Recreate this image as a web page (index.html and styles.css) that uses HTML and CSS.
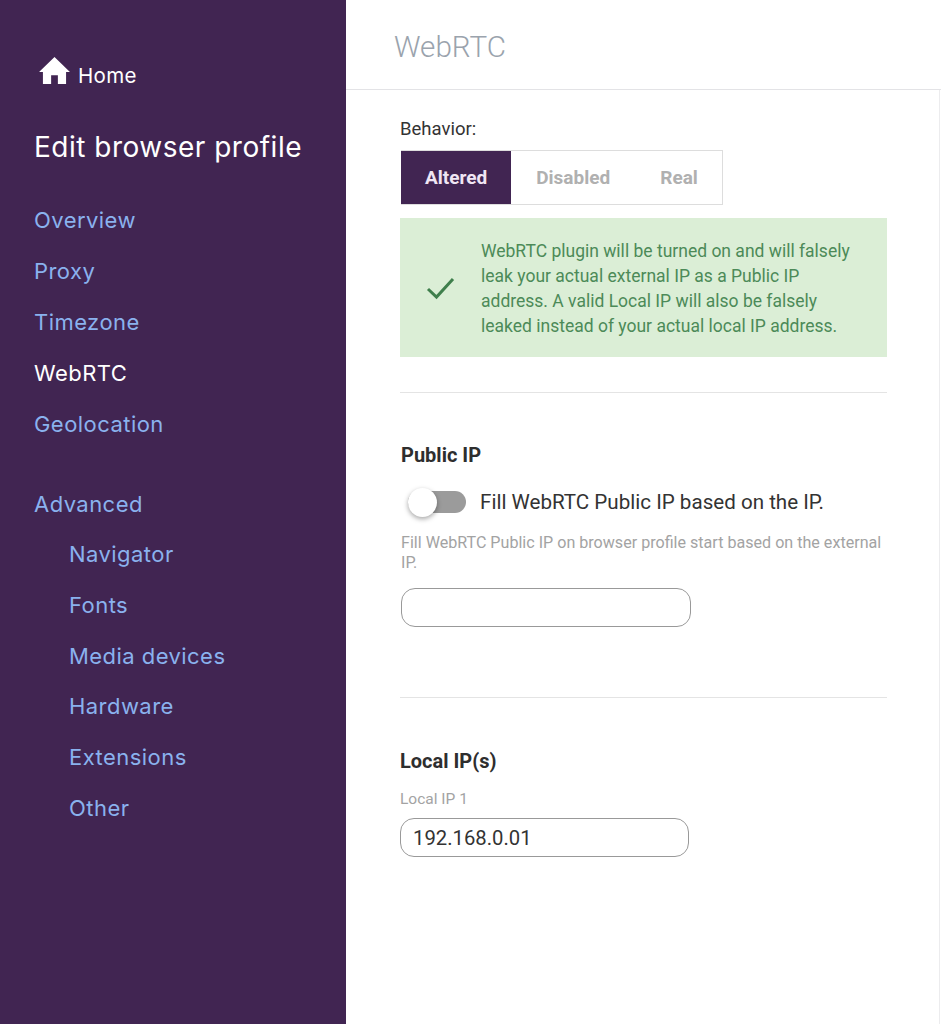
FILE: index.html
```html
<!DOCTYPE html>
<html>
<head>
	<title>WebRTC</title>
	<meta charset="utf-8">
	<link rel="stylesheet" href="styles.css">
</head>
<body>
	<div class="sidebar">
		<a class="home-link" href="#">
			<svg class="home-icon" viewBox="0 0 32 28"><path d="M16 0 L32 15.5 L28 15.5 L28 28 L19.5 28 L19.5 19 L12.5 19 L12.5 28 L4 28 L4 15.5 L0 15.5 Z"/></svg>
			<span>Home</span>
		</a>
		<h2 class="sidebar-title">Edit browser profile</h2>
		<ul class="nav">
			<li><a href="#">Overview</a></li>
			<li><a href="#">Proxy</a></li>
			<li><a href="#">Timezone</a></li>
			<li><a class="active" href="#">WebRTC</a></li>
			<li><a href="#">Geolocation</a></li>
		</ul>
		<div class="nav-heading"><a href="#">Advanced</a></div>
		<ul class="nav nav-sub">
			<li><a href="#">Navigator</a></li>
			<li><a href="#">Fonts</a></li>
			<li><a href="#">Media devices</a></li>
			<li><a href="#">Hardware</a></li>
			<li><a href="#">Extensions</a></li>
			<li><a href="#">Other</a></li>
		</ul>
	</div>

	<div class="main">
		<div class="page-header">WebRTC</div>
		<div class="content">
			<div class="behavior-label">Behavior:</div>
			<div class="segments">
				<div class="segment selected">Altered</div>
				<div class="segment">Disabled</div>
				<div class="segment">Real</div>
			</div>
			<div class="notice">
				<svg class="check-icon" viewBox="0 0 30 24"><path d="M2 13 L10.5 21 L27 3"/></svg>
				<p>WebRTC plugin will be turned on and will falsely leak your actual external IP as a Public IP address. A valid Local IP will also be falsely leaked instead of your actual local IP address.</p>
			</div>
			<hr class="divider">

			<h3 class="section-title public-title">Public IP</h3>
			<div class="toggle-row">
				<div class="toggle"><div class="toggle-knob"></div></div>
				<span>Fill WebRTC Public IP based on the IP.</span>
			</div>
			<p class="hint">Fill WebRTC Public IP on browser profile start based on the external IP.</p>
			<input class="text-input public-input" type="text">
			<hr class="divider second">

			<h3 class="section-title local-title">Local IP(s)</h3>
			<label class="field-label" for="local-ip">Local IP 1</label>
			<input class="text-input" id="local-ip" type="text" value="192.168.0.01">
		</div>
	</div>
</body>
</html>
```

FILE: styles.css
```css
* {
	box-sizing: border-box;
}

html, body {
	height: 100%;
}

body {
	margin: 0;
	display: flex;
	min-height: 1024px;
	font-family: Roboto, Arial, sans-serif;
	background-color: #ffffff;
	color: #333333;
	overflow: hidden;
}

a {
	text-decoration: none;
}

.sidebar {
	width: 346px;
	flex-shrink: 0;
	background-color: #412552;
	font-family: Inter, Arial, sans-serif;
	padding: 55px 0 0 34px;
}

.home-link {
	display: flex;
	align-items: center;
	color: #ffffff;
	font-size: 20.5px;
	letter-spacing: 0.3px;
	margin-left: 5px;
	height: 40px;
}

.home-icon {
	width: 31px;
	height: 27px;
	fill: #ffffff;
	margin-right: 8px;
	margin-top: -9px;
}

.sidebar-title {
	margin: 32px 0 0;
	font-size: 28px;
	line-height: 40px;
	font-weight: 400;
	color: #ffffff;
	letter-spacing: 0.5px;
}

.nav {
	list-style: none;
	margin: 28px 0 0;
	padding: 0;
	letter-spacing: 0.45px;
}

.nav li {
	height: 51px;
	line-height: 51px;
	font-size: 22px;
}

.nav a, .nav-heading a {
	color: #8ab2ee;
}

.nav a.active {
	color: #ffffff;
}

.nav-heading {
	margin-top: 29px;
	height: 50px;
	line-height: 51px;
	font-size: 22px;
	letter-spacing: 0.45px;
}

.nav-sub {
	margin: 0 0 0 35px;
}

.nav-sub li {
	height: 50.8px;
}

.main {
	flex: 1;
	min-width: 0;
}

.page-header {
	height: 90px;
	padding: 29px 0 0 48px;
	font-size: 29.6px;
	line-height: 36px;
	font-weight: 300;
	color: #9aa3ad;
	border-bottom: 1px solid #e3e3e6;
}

.content {
	padding: 28px 0 0 54px;
	width: 594px;
	height: 934px;
	border-right: 1px solid #ececee;
}

.behavior-label {
	font-size: 18.5px;
	line-height: 22px;
}

.segments {
	display: flex;
	width: 322px;
	height: 55px;
	margin: 10px 0 0 1px;
	border: 1px solid #dddddd;
	border-left: 0;
}

.segment {
	font-size: 19px;
	font-weight: 700;
	line-height: 54px;
	color: #b0b0b0;
	padding: 0 25px;
}

.segment.selected {
	background-color: #412552;
	color: #f0e6f4;
	width: 111px;
	padding: 0 24px;
}

.notice {
	display: flex;
	align-items: center;
	width: 487px;
	height: 139px;
	margin-top: 13px;
	padding-left: 26px;
	background-color: #dbeed6;
	color: #4c8a58;
}

.check-icon {
	width: 30px;
	height: 24px;
	flex-shrink: 0;
	margin-right: 25px;
	fill: none;
	stroke: #3f7f4c;
	stroke-width: 3;
}

.notice p {
	margin: 2px 0 0;
	font-size: 17.5px;
	line-height: 25px;
	width: 380px;
}

.divider {
	width: 487px;
	height: 1px;
	margin: 35px 0 0;
	border: 0;
	background-color: #e4e4e4;
}

.divider.second {
	margin-top: 70px;
}

.section-title {
	margin: 0;
	font-size: 20px;
	font-weight: 700;
	line-height: 24px;
	color: #2e2e2e;
}

.public-title {
	margin: 50px 0 0 1px;
}

.local-title {
	margin-top: 51px;
}

.toggle-row {
	display: flex;
	align-items: center;
	margin-top: 20px;
	height: 30px;
	font-size: 20.6px;
	color: #333333;
}

.toggle {
	position: relative;
	width: 58px;
	height: 22px;
	margin: 0 14px 0 8px;
	border-radius: 11px;
	background-color: #9b9b9b;
}

.toggle-knob {
	position: absolute;
	left: 0;
	top: -3px;
	width: 29px;
	height: 29px;
	border-radius: 50%;
	background-color: #ffffff;
	box-shadow: 0 2px 5px rgba(0, 0, 0, 0.35);
}

.hint {
	margin: 16px 0 0 1px;
	width: 487px;
	font-size: 16.1px;
	line-height: 20px;
	color: #a3a3a3;
}

.text-input {
	display: block;
	width: 290px;
	height: 39px;
	padding: 0 12px;
	border: 1.5px solid #999999;
	border-radius: 14px;
	font-family: Roboto, Arial, sans-serif;
	font-size: 20.3px;
	color: #333333;
	background-color: #ffffff;
	outline: none;
}

.public-input {
	margin: 15px 0 0 1px;
}

.field-label {
	display: block;
	margin-top: 16px;
	font-size: 15.5px;
	line-height: 20px;
	color: #a3a3a3;
}

#local-ip {
	margin-top: 9px;
	width: 289px;
}
```
